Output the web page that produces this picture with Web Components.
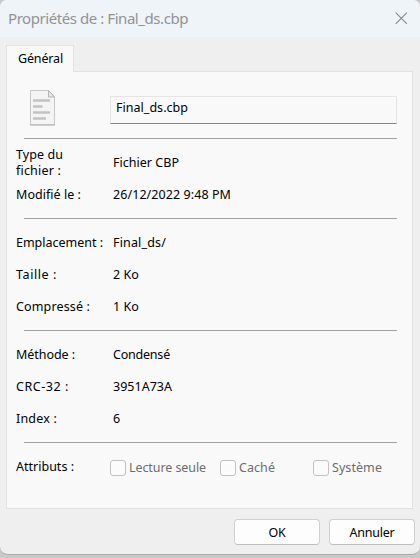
<!DOCTYPE html>
<html lang="fr">
<head>
<meta charset="utf-8">
<title>Propriétés</title>
<style>
body{margin:0;width:420px;height:558px;overflow:hidden;background:#c9c9c9;font:12.5px/16px "Noto Sans","DejaVu Sans",sans-serif;color:#000}
</style>
</head>
<body>
<props-dialog></props-dialog>
<script>
const define=(name,html,init)=>customElements.define(name,class extends HTMLElement{
  connectedCallback(){
    if(this.shadowRoot)return;
    this.attachShadow({mode:'open'}).innerHTML=html;
    if(init)init(this,this.shadowRoot);
  }
});

/* One line of text whose tracking is set so that it takes up the width in "w". */
define('fit-text','<style>:host{display:inline-block;white-space:nowrap}span{display:inline-block}</style><span><slot></slot></span>',(el,root)=>{
  const s=root.querySelector('span'),w=+el.getAttribute('w');
  if(w)s.style.letterSpacing=(w-s.getBoundingClientRect().width)/el.textContent.length+'px';
});

define('title-bar',`<style>:host{display:flex;justify-content:space-between;height:37px;background:#eff4f8;color:#929394;font:15px/37px "Noto Sans",sans-serif;box-sizing:border-box;padding:0 12px 0 8px}svg{display:block;margin-top:12px}</style>
<slot></slot><svg width="13" height="13" viewBox="0 0 13 13" fill="none" stroke="#858788" stroke-width="1.1"><path d="M.7.7l11.2 11.2M11.9.7L.7 11.9"/></svg>`);

define('file-icon',`<style>:host{display:block}svg{display:block}</style>
<svg width="27" height="37" viewBox="0 0 27 37"><path d="M.5.5h18l6 6.500v28H.5z" fill="#f4f4f4" stroke="#c6c8c8"/><path d="M0 34.900h25" stroke="#b9bbbb" stroke-width="1.300"/><path d="M18.500 .5v6.500h6z" fill="#e5e5e5" stroke="#b3b5b5"/><path d="M3 10.500h17M3 16.500h9.500M3 22.500h17M3 28.500h13" stroke="#c2c2c2" stroke-width="2.500"/></svg>`);

define('text-field',`<style>:host{display:block;box-sizing:border-box;width:287px;height:28px;border:1px solid #e5e5e5;border-bottom-color:#858585;border-radius:1px;padding:3px 0 0 5px}</style><slot></slot>`);

define('rule-line',`<style>:host{display:block;height:1px;background:#a0a0a0;margin:0 15px 0 17px}</style>`);

define('prop-row',`<style>:host{display:grid;grid-template-columns:97px 1fr;align-items:center;height:32px}</style><div><slot name="k"></slot></div><div><slot></slot></div>`);

define('prop-group',`<style>:host{display:block;padding:8px 0 7px 9px}</style><slot></slot>`);

define('check-box',`<style>:host{display:flex;align-items:center;gap:3px;color:#6d6d6d}i{box-sizing:border-box;width:16px;height:16px;border:1px solid #c2c2c2;border-radius:3px;background:#fbfbfb}</style><i></i><slot></slot>`);

define('push-button',`<style>:host{display:flex;justify-content:center;box-sizing:border-box;width:86px;height:26px;border:1px solid #d0d0d0;border-bottom-color:#bfbfbf;border-radius:4px;background:#fdfdfd;line-height:25px}</style><slot></slot>`);

define('tab-panel',`<style>
:host{display:block;padding:8px 7px 0 6px}
.tab{position:relative;z-index:1;box-sizing:border-box;width:68px;height:27px;border:1px solid #e2e2e2;border-bottom:0;background:#f9f9f9;padding:5px 0 0 11px;margin-bottom:-1px}
.body{box-sizing:border-box;height:438px;border:1px solid #e2e2e2;background:#f9f9f9}
</style><div class="tab"><slot name="tab"></slot></div><div class="body"><slot></slot></div>`);

define('props-dialog',`<style>
:host{display:block;box-sizing:border-box;height:555px;background:#efefef;border-bottom:1px solid #a9a9a9;border-radius:7px 7px 8px 8px;overflow:hidden}
.head{display:flex;height:66px;box-sizing:border-box;padding:18px 0 0 23px}
file-icon{width:27px}
text-field{margin:6px 0 0 53px}
.type{height:32px}
.attrs{display:flex;padding:8px 0 0 9px;align-items:center;height:32px}
.attrs>:first-child{width:94px}
.checks{display:flex;padding-top:2px}
.c1{width:110px}.c2{width:93px}
.buttons{display:flex;justify-content:flex-end;gap:9px;padding:10px 5px 0 0}
</style>
<title-bar><fit-text w="180">Propriétés de : Final_ds.cbp</fit-text></title-bar>
<tab-panel><fit-text slot="tab" w="45">Général</fit-text>
<div class="head"><file-icon></file-icon><text-field><fit-text w="72">Final_ds.cbp</fit-text></text-field></div>
<rule-line></rule-line>
<prop-group>
<prop-row class="type"><div slot="k"><fit-text w="47">Type du</fit-text><br><fit-text w="45">fichier :</fit-text></div><fit-text w="66">Fichier CBP</fit-text></prop-row>
<prop-row><fit-text slot="k" w="65">Modifié le :</fit-text><fit-text w="118">26/12/2022 9:48 PM</fit-text></prop-row>
</prop-group>
<rule-line></rule-line>
<prop-group>
<prop-row><fit-text slot="k" w="87">Emplacement :</fit-text><fit-text w="53">Final_ds/</fit-text></prop-row>
<prop-row><fit-text slot="k" w="41">Taille :</fit-text><fit-text w="26">2 Ko</fit-text></prop-row>
<prop-row><fit-text slot="k" w="74">Compressé :</fit-text><fit-text w="26">1 Ko</fit-text></prop-row>
</prop-group>
<rule-line></rule-line>
<prop-group>
<prop-row><fit-text slot="k" w="59">Méthode :</fit-text><fit-text w="57">Condensé</fit-text></prop-row>
<prop-row><fit-text slot="k" w="53">CRC-32 :</fit-text><fit-text w="59">3951A73A</fit-text></prop-row>
<prop-row><fit-text slot="k" w="41">Index :</fit-text><span>6</span></prop-row>
</prop-group>
<rule-line></rule-line>
<div class="attrs"><div><fit-text w="58">Attributs :</fit-text></div><div class="checks">
<check-box class="c1"><fit-text w="77">Lecture seule</fit-text></check-box><check-box class="c2"><fit-text w="36">Caché</fit-text></check-box><check-box><fit-text w="50">Système</fit-text></check-box></div></div>
</tab-panel>
<div class="buttons"><push-button><fit-text w="17">OK</fit-text></push-button><push-button><fit-text w="45">Annuler</fit-text></push-button></div>`);
</script>
</body>
</html>
